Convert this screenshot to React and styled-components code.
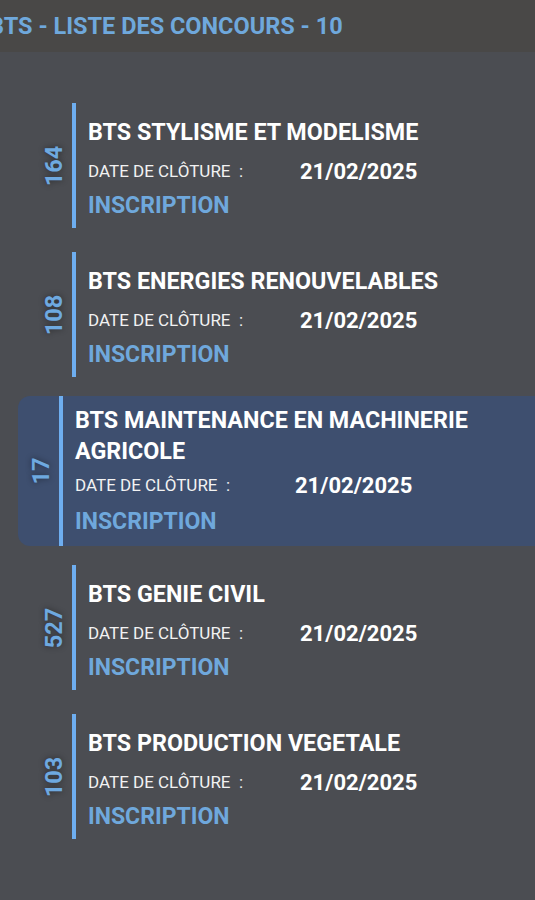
import styled, { createGlobalStyle } from "styled-components"

const GlobalStyle = createGlobalStyle`
html, body {
margin: 0;
padding: 0;
background: #4b4d52;
font-family: Roboto, "Liberation Sans", sans-serif;
}
`

const concours = [
    { id: 164, title: "BTS STYLISME ET MODELISME", date: "21/02/2025" },
    { id: 108, title: "BTS ENERGIES RENOUVELABLES", date: "21/02/2025" },
    { id: 17, title: "BTS MAINTENANCE EN MACHINERIE AGRICOLE", date: "21/02/2025", active: true },
    { id: 527, title: "BTS GENIE CIVIL", date: "21/02/2025" },
    { id: 103, title: "BTS PRODUCTION VEGETALE", date: "21/02/2025" },
]

const ConcoursItem = ({ id, title, date, active }) => {
    return (
        <Item $active={active}>
            <NumberCol>
                <Number>{id}</Number>
            </NumberCol>
            <Bar />
            <Content $active={active}>
                <Title $active={active}>{title}</Title>
                <DateRow $active={active}>
                    <DateLabel $active={active}>DATE DE CLÔTURE&nbsp; :</DateLabel>
                    <DateValue>{date}</DateValue>
                </DateRow>
                <Inscription $active={active}>INSCRIPTION</Inscription>
            </Content>
        </Item>
    )
}

const App = () => {
    return (
        <Page>
            <GlobalStyle />
            <Header>
                <HeaderTitle>BTS - LISTE DES CONCOURS - 10</HeaderTitle>
            </Header>
            <List>
                {concours.map((c) => (
                    <ConcoursItem key={c.id} {...c} />
                ))}
            </List>
        </Page>
    )
}
export default App

const Page = styled.div`
width: 535px;
height: 900px;
overflow: hidden;
background: #4b4d52;
`
const Header = styled.header`
height: 52px;
background: #494847;
display: flex;
align-items: center;
overflow: hidden;
`
const HeaderTitle = styled.h1`
margin: 0 0 0 -11px;
font-size: 23.5px;
font-weight: 700;
color: #6fa8dc;
white-space: nowrap;
`
const List = styled.ul`
list-style: none;
margin: 0;
padding: 51px 0 0;
display: flex;
flex-direction: column;
gap: 24px;
`
const Item = styled.li`
display: flex;
align-items: stretch;
margin-left: ${(p) => (p.$active ? "18px" : "36px")};
padding-left: ${(p) => (p.$active ? "5px" : "0")};
margin-top: ${(p) => (p.$active ? "-5px" : "0")};
margin-bottom: ${(p) => (p.$active ? "-5px" : "0")};
background: ${(p) => (p.$active ? "#3e4f6f" : "transparent")};
border-radius: ${(p) => (p.$active ? "12px 0 0 12px" : "0")};
`
const NumberCol = styled.div`
width: 36px;
flex-shrink: 0;
display: flex;
align-items: center;
justify-content: center;
`
const Number = styled.span`
transform: rotate(-90deg);
font-size: 23.5px;
font-weight: 700;
color: #6ea9e0;
text-shadow: 0 0 6px rgba(0, 0, 0, 0.45);
white-space: nowrap;
`
const Bar = styled.div`
width: 4px;
background: #6eaef0;
flex-shrink: 0;
`
const Content = styled.div`
padding: ${(p) => (p.$active ? "9px 10px 9px 12px" : "14px 10px 7px 12px")};
display: flex;
flex-direction: column;
`
const Title = styled.h3`
margin: 0;
font-size: 23.3px;
font-weight: 700;
line-height: ${(p) => (p.$active ? "31px" : "30px")};
color: #ffffff;
`
const DateRow = styled.div`
display: flex;
align-items: center;
height: 36px;
margin-top: ${(p) => (p.$active ? "0" : "6px")};
`
const DateLabel = styled.span`
width: ${(p) => (p.$active ? "220px" : "212px")};
font-size: 17px;
color: #f2f2f2;
`
const DateValue = styled.span`
font-size: 22px;
font-weight: 700;
color: #ffffff;
`
const Inscription = styled.span`
margin-top: ${(p) => (p.$active ? "4px" : "2px")};
font-size: 23px;
font-weight: 700;
line-height: 30px;
color: #6fa8dc;
`
